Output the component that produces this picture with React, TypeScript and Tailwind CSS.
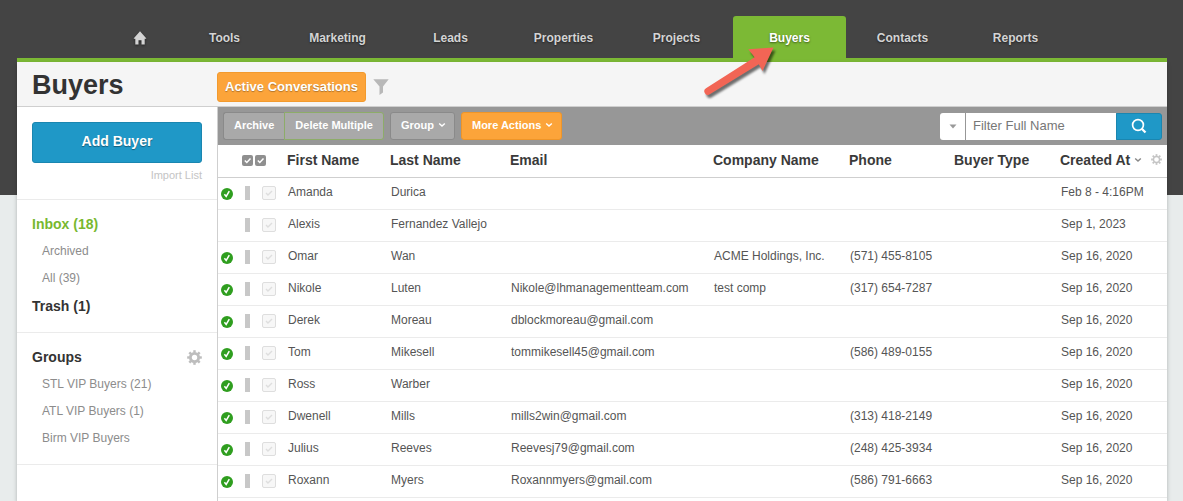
import { useState } from 'react';
import clsx from 'clsx';

interface Buyer {
  first: string;
  last: string;
  email?: string;
  company?: string;
  phone?: string;
  created: string;
  verified: boolean;
}

const TABS = ['Tools', 'Marketing', 'Leads', 'Properties', 'Projects', 'Buyers', 'Contacts', 'Reports'];

const BUYERS: Buyer[] = [
  { first: 'Amanda', last: 'Durica', created: 'Feb 8 - 4:16PM', verified: true },
  { first: 'Alexis', last: 'Fernandez Vallejo', created: 'Sep 1, 2023', verified: false },
  { first: 'Omar', last: 'Wan', company: 'ACME Holdings, Inc.', phone: '(571) 455-8105', created: 'Sep 16, 2020', verified: true },
  { first: 'Nikole', last: 'Luten', email: 'Nikole@lhmanagementteam.com', company: 'test comp', phone: '(317) 654-7287', created: 'Sep 16, 2020', verified: true },
  { first: 'Derek', last: 'Moreau', email: 'dblockmoreau@gmail.com', created: 'Sep 16, 2020', verified: true },
  { first: 'Tom', last: 'Mikesell', email: 'tommikesell45@gmail.com', phone: '(586) 489-0155', created: 'Sep 16, 2020', verified: true },
  { first: 'Ross', last: 'Warber', created: 'Sep 16, 2020', verified: true },
  { first: 'Dwenell', last: 'Mills', email: 'mills2win@gmail.com', phone: '(313) 418-2149', created: 'Sep 16, 2020', verified: true },
  { first: 'Julius', last: 'Reeves', email: 'Reevesj79@gmail.com', phone: '(248) 425-3934', created: 'Sep 16, 2020', verified: true },
  { first: 'Roxann', last: 'Myers', email: 'Roxannmyers@gmail.com', phone: '(586) 791-6663', created: 'Sep 16, 2020', verified: true },
];

const TEETH = [0, 45, 90, 135, 180, 225, 270, 315];

function Gear({ className, ring }: { className?: string; ring: number }) {
  return (
    <svg viewBox="0 0 16 16" className={className} fill="none" stroke="currentColor">
      <circle cx="8" cy="8" r="4.4" strokeWidth={ring} />
      {TEETH.map(a => (
        <path key={a} d="M8 0.2V2.8" strokeWidth="2.6" transform={`rotate(${a} 8 8)`} />
      ))}
    </svg>
  );
}

function Chevron({ className }: { className?: string }) {
  return (
    <svg viewBox="0 0 8 6" className={clsx('h-[6px] w-2', className)} fill="none" stroke="currentColor" strokeWidth="1.4">
      <path d="M1.2 1.4L4 4.1l2.8-2.7" />
    </svg>
  );
}

function HomeIcon() {
  return (
    <svg viewBox="0 0 14 14" className="h-[14px] w-[14px] drop-shadow-[0_1px_1px_rgba(0,0,0,0.5)]" fill="currentColor">
      <path d="M7 .3L.8 7.2c-.2.300 0 .6.300.6h1.200V13.500h3.200V9.300h3v4.200h3.200V7.800h1.200c.3 0 .5-.3.300-.6z" />
    </svg>
  );
}

function VerifiedIcon() {
  return (
    <svg viewBox="0 0 12 12" className="mt-[2px] h-3 w-3">
      <circle cx="6" cy="6" r="6" fill="#2f9e1f" />
      <path d="M3.4 6.200l1.800 2.300L8.300 3.200" fill="none" stroke="#fff" strokeWidth="1.500" />
    </svg>
  );
}

function SmallCheck() {
  return (
    <svg viewBox="0 0 11 11" className="h-[11px] w-[11px]">
      <rect width="11" height="11" rx="2" fill="#8f8f8f" />
      <path d="M2.800 5.500l2 2 3.700-4" fill="none" stroke="#fff" strokeWidth="1.500" />
    </svg>
  );
}

function Arrow() {
  return (
    <svg
      viewBox="700 40 90 64"
      className="pointer-events-none absolute top-6 -left-[33px] z-10 h-16 w-[90px] drop-shadow-[2px_3px_1px_rgba(0,0,0,0.55)]"
      fill="#f26555"
    >
      <path d="M773.500 47.500L748.300 49.300L754.600 57.300L706 88.300A3.500 3.500 0 0 0 709.800 94.300L758.800 64.200L762.500 71Z" />
    </svg>
  );
}

function TopNav() {
  return (
    <nav className="flex items-end justify-center border-b-4 border-[#7cb935] pt-4 text-xs font-bold text-[#d4d4d4]">
      <a href="#home" aria-label="Home" className="flex h-[42px] w-14 items-center justify-center pt-[2px]">
        <HomeIcon />
      </a>
      {TABS.map(tab => (
        <div key={tab} className="relative w-[113px]">
          <a
            href={`#${tab.toLowerCase()}`}
            className={clsx(
              'flex h-[42px] items-center justify-center pt-[2px] [text-shadow:0_1px_2px_rgba(0,0,0,0.5)]',
              tab === 'Buyers' && 'rounded-t-[3px] bg-[#7cb935] text-white'
            )}
          >
            {tab}
          </a>
          {tab === 'Buyers' && <Arrow />}
        </div>
      ))}
    </nav>
  );
}

function Sidebar() {
  return (
    <aside className="w-[201px] shrink-0 border-r border-[#cfcfcf] bg-white">
      <div className="px-[15px] pt-[15px]">
        <button className="h-[41px] w-full rounded-[3px] border border-[#1a86b0] bg-[#1f98c7] pb-1 text-sm font-bold text-white [text-shadow:0_1px_1px_rgba(0,0,0,0.4)]">
          Add Buyer
        </button>
        <a href="#import" className="block pt-1 pb-4 text-right text-[11px] leading-4 text-[#c4c4c4]">Import List</a>
      </div>
      <div className="border-t border-[#ebebeb] px-[15px] pt-[10px] pb-3 text-xs text-[#8c8c8c]">
        <a href="#inbox" className="block text-sm leading-7 font-bold text-[#78b82f]">Inbox (18)</a>
        <a href="#archived" className="block pl-[10px] leading-[27px]">Archived</a>
        <a href="#all" className="block pl-[10px] leading-[27px]">All (39)</a>
        <a href="#trash" className="block text-sm leading-7 font-bold text-[#333]">Trash (1)</a>
      </div>
      <div className="border-y border-[#ebebeb] px-[15px] pt-[10px] pb-3 text-xs text-[#8c8c8c]">
        <div className="flex items-center justify-between">
          <h2 className="text-sm leading-7 font-bold text-[#333]">Groups</h2>
          <button aria-label="Manage groups" className="text-[#bdbdbd]">
            <Gear className="h-[15px] w-[15px]" ring={3} />
          </button>
        </div>
        <a href="#stl" className="block pl-[10px] leading-[27px]">STL VIP Buyers (21)</a>
        <a href="#atl" className="block pl-[10px] leading-[27px]">ATL VIP Buyers (1)</a>
        <a href="#birm" className="block pl-[10px] leading-[27px]">Birm VIP Buyers</a>
      </div>
    </aside>
  );
}

const toolButton = 'flex h-7 items-center border border-[#8a8a8a] bg-[#a9a9a9] px-[10px] pb-[2px]';

function Toolbar() {
  const [query, setQuery] = useState('');

  return (
    <div className="flex h-[38px] items-center justify-between bg-[#979797] px-[5px]">
      <div className="flex gap-[6px] text-[11px] font-bold text-white [text-shadow:0_1px_1px_rgba(0,0,0,0.4)]">
        <div className="flex">
          <button className={clsx(toolButton, 'rounded-l-[3px] border-r-0')}>Archive</button>
          <button className="flex h-7 items-center rounded-r-[3px] border border-[#8dac69] bg-[#a9a9a9] px-[10px] pb-[2px]">
            Delete Multiple
          </button>
        </div>
        <button className={clsx(toolButton, 'gap-1 rounded-[3px] pr-2')}>
          Group <Chevron />
        </button>
        <button className="flex h-7 items-center gap-1 rounded-[3px] border border-[#ef9528] bg-[#fca43a] px-[10px] pr-2 pb-[2px]">
          More Actions <Chevron />
        </button>
      </div>
      <div className="flex h-[27px]">
        <button aria-label="Choose filter field" className="flex w-[25px] items-center justify-center rounded-l-[3px] bg-white text-[#999]">
          <svg viewBox="0 0 8 5" className="h-[5px] w-2" fill="currentColor">
            <path d="M.5.500h7L4 4.500z" />
          </svg>
        </button>
        <input
          type="text"
          aria-label="Filter Full Name"
          placeholder="Filter Full Name"
          value={query}
          onChange={e => setQuery(e.target.value)}
          className="w-[151px] border-l border-[#979797] bg-white px-[7px] text-[13px] text-[#555] outline-none placeholder:text-[#777]"
        />
        <button aria-label="Search" className="flex w-[46px] items-center justify-center rounded-r-[3px] border border-[#1a86b0] bg-[#1f98c7] text-white">
          <svg viewBox="0 0 16 16" className="h-4 w-4" fill="none" stroke="currentColor">
            <circle cx="7" cy="7" r="5.400" strokeWidth="1.700" />
            <path d="M10.800 10.800l3.700 3.700" strokeWidth="2.300" />
          </svg>
        </button>
      </div>
    </div>
  );
}

function BuyerRow({ buyer }: { buyer: Buyer }) {
  const [checked, setChecked] = useState(false);

  return (
    <tr className="h-8 border-b border-[#ebebeb]">
      <td className="pl-[3px]">{buyer.verified && <VerifiedIcon />}</td>
      <td>
        <div className="flex items-center gap-3 pl-[3px]">
          <span className="h-[14px] w-[5px] bg-[#c8c8c8]" />
          <label className="grid h-[14px] w-[14px] place-items-center">
            <input
              type="checkbox"
              aria-label={`Select ${buyer.first} ${buyer.last}`}
              checked={checked}
              onChange={() => setChecked(!checked)}
              className="col-start-1 row-start-1 h-[14px] w-[14px] appearance-none rounded-[2px] border border-[#dedede] bg-[#f7f7f7]"
            />
            <svg viewBox="0 0 8 8" className="pointer-events-none col-start-1 row-start-1 h-2 w-2" fill="none">
              <path d="M1 4l2 2 4-4" stroke={checked ? '#555' : '#dedede'} strokeWidth="1.400" />
            </svg>
          </label>
        </div>
      </td>
      <td className="pb-[2px] pl-px">{buyer.first}</td>
      <td className="pb-[2px] pl-px">{buyer.last}</td>
      <td className="pb-[2px] pl-px">{buyer.email}</td>
      <td className="pb-[2px] pl-px">{buyer.company}</td>
      <td className="pb-[2px] pl-px">{buyer.phone}</td>
      <td />
      <td className="pb-[2px] pl-px">{buyer.created}</td>
    </tr>
  );
}

function BuyersTable() {
  return (
    <table className="w-full table-fixed border-collapse text-left text-xs whitespace-nowrap text-[#555]">
      <thead className="text-sm text-[#3a3a3a]">
        <tr className="h-8 border-b border-[#cfcfcf]">
          <td className="w-6" />
          <td className="w-[45px]">
            <button aria-label="Select all" className="flex gap-[2px]">
              <SmallCheck />
              <SmallCheck />
            </button>
          </td>
          <th className="w-[103px] pb-[2px]">First Name</th>
          <th className="w-[120px] pb-[2px]">Last Name</th>
          <th className="pb-[2px]">Email</th>
          <th className="w-[136px] pb-[2px]">Company Name</th>
          <th className="w-[105px] pb-[2px]">Phone</th>
          <th className="w-[106px] pb-[2px]">Buyer Type</th>
          <th className="w-[107px] pb-[2px]">
            <div className="flex items-center justify-between pr-[5px]">
              <button className="flex items-center gap-1">
                Created At <Chevron className="text-[#888]" />
              </button>
              <button aria-label="Column settings" className="text-[#c4c4c4]">
                <Gear className="h-[11px] w-[11px]" ring={2} />
              </button>
            </div>
          </th>
        </tr>
      </thead>
      <tbody>
        {BUYERS.map(b => (
          <BuyerRow key={b.first} buyer={b} />
        ))}
      </tbody>
    </table>
  );
}

export default function App() {
  return (
    <div className="flex min-h-screen flex-col bg-[linear-gradient(#444_195px,#e8ecec_195px)] pr-4 pl-[17px] font-['Liberation_Sans',Arial,sans-serif]">
      <TopNav />
      <div className="flex grow flex-col bg-white shadow-[0_2px_4px_rgba(0,0,0,0.25)]">
        <header className="flex h-[45px] items-center border-b border-[#cfcfcf] bg-[#f5f5f5] pl-[15px]">
          <h1 className="w-[185px] pt-[2px] text-[27px] leading-8 font-bold text-[#333]">Buyers</h1>
          <button className="mt-[5px] h-[30px] rounded-[3px] border border-[#f29a2e] bg-[#fca43a] px-[7px] text-[13px] font-bold text-white [text-shadow:0_1px_1px_rgba(0,0,0,0.3)]">
            Active Conversations
          </button>
          <button aria-label="Filter" className="mt-[5px] ml-[7px] text-[#b8b8b8]">
            <svg viewBox="0 0 16 16" className="h-4 w-4" fill="currentColor">
              <path d="M.300.300h15.400L10 7.500v6L6.500 16V7.500z" />
            </svg>
          </button>
        </header>
        <div className="flex grow">
          <Sidebar />
          <main className="min-w-0 grow">
            <Toolbar />
            <BuyersTable />
          </main>
        </div>
      </div>
    </div>
  );
}
